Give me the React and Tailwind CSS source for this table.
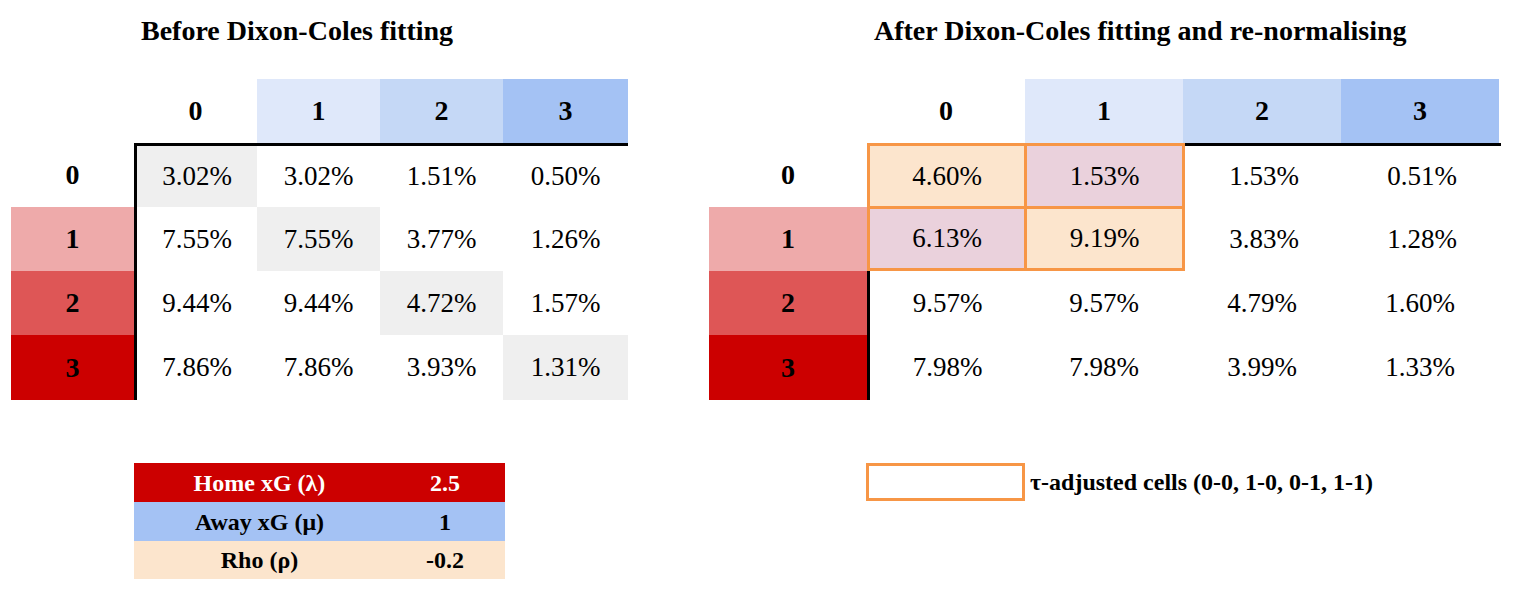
import React from 'react';

const leftCols = ['0', '1', '2', '3'];
const headBg = ['bg-white', 'bg-[#dfe8fa]', 'bg-[#c5d8f6]', 'bg-[#a4c2f4]'];
const rowBg = ['bg-white', 'bg-[#eeaaaa]', 'bg-[#de5656]', 'bg-[#cc0000]'];

const before = [
    ['3.02%', '3.02%', '1.51%', '0.50%'],
    ['7.55%', '7.55%', '3.77%', '1.26%'],
    ['9.44%', '9.44%', '4.72%', '1.57%'],
    ['7.86%', '7.86%', '3.93%', '1.31%'],
];

const after = [
    ['4.60%', '1.53%', '1.53%', '0.51%'],
    ['6.13%', '9.19%', '3.83%', '1.28%'],
    ['9.57%', '9.57%', '4.79%', '1.60%'],
    ['7.98%', '7.98%', '3.99%', '1.33%'],
];

const rowH = ['h-[64px]', 'h-[64px]', 'h-[64px]', 'h-[65px]'];
const Cell = ({ className = '', children }) => (
    <div className={`flex items-center justify-center ${className}`}>{children}</div>
);

const Title = ({ children, className = '' }) => (
    <h2 className={`h-[62px] flex items-center text-[28px] font-bold text-black ${className}`}>{children}</h2>
);

const BeforeTable = () => (
    <div className="flex flex-col">
        <div className="flex h-[64px]">
            <div className="w-[123px]" />
            {leftCols.map((c, i) => (
                <Cell key={c} className={`${i === 3 ? 'w-[125px]' : 'w-[123px]'} text-[28px] font-bold ${headBg[i]}`}>{c}</Cell>
            ))}
        </div>
        <div className="flex">
            <div className="flex flex-col w-[123px]">
                {leftCols.map((r, i) => (
                    <Cell key={r} className={`${rowH[i]} text-[28px] font-bold ${rowBg[i]}`}>{r}</Cell>
                ))}
            </div>
            <div className="flex flex-col border-l-[3px] border-t-[3px] border-black">
                {before.map((row, ri) => (
                    <div key={ri} className={`flex ${ri === 0 ? 'h-[61px]' : rowH[ri]}`}>
                        {row.map((v, ci) => (
                            <Cell
                                key={ci}
                                className={`${ci === 0 ? 'w-[120px]' : ci === 3 ? 'w-[125px]' : 'w-[123px]'} text-[27px] ${ri === ci ? 'bg-[#efefef]' : ''}`}
                            >
                                {v}
                            </Cell>
                        ))}
                    </div>
                ))}
            </div>
        </div>
    </div>
);

const AfterTable = () => (
    <div className="flex flex-col">
        <div className="flex h-[64px]">
            <div className="w-[158px]" />
            {leftCols.map((c, i) => (
                <Cell key={c} className={`w-[158px] text-[28px] font-bold ${headBg[i]}`}>{c}</Cell>
            ))}
        </div>
        <div className="flex">
            <div className="flex flex-col w-[158px]">
                {leftCols.map((r, i) => (
                    <Cell key={r} className={`${rowH[i]} text-[28px] font-bold ${rowBg[i]}`}>{r}</Cell>
                ))}
            </div>
            <div className="flex flex-col border-l-[3px] border-t-[3px] border-black">
                <div className="flex h-[125px]">
                    {/* tau-adjusted block */}
                    <div className="-ml-[3px] -mt-[3px] grid grid-cols-[154px_155px] grid-rows-[60px_59px] gap-[3px] border-[3px] border-[#f79646] bg-[#f79646] text-[27px]">
                        <Cell className="bg-[#fce5cd]">{after[0][0]}</Cell>
                        <Cell className="bg-[#ead1dc]">{after[0][1]}</Cell>
                        <Cell className="bg-[#ead1dc]">{after[1][0]}</Cell>
                        <Cell className="bg-[#fce5cd]">{after[1][1]}</Cell>
                    </div>
                    <div className="flex flex-col">
                        {[0, 1].map((ri) => (
                            <div key={ri} className={`flex ${ri === 0 ? 'h-[61px]' : 'h-[64px]'}`}>
                                {after[ri].slice(2).map((v, ci) => (
                                    <Cell key={ci} className="w-[158px] text-[27px]">{v}</Cell>
                                ))}
                            </div>
                        ))}
                    </div>
                </div>
                {[2, 3].map((ri) => (
                    <div key={ri} className={`flex ${rowH[ri]}`}>
                        {after[ri].map((v, ci) => (
                            <Cell key={ci} className={`${ci === 0 ? 'w-[155px]' : 'w-[158px]'} text-[27px]`}>{v}</Cell>
                        ))}
                    </div>
                ))}
            </div>
        </div>
    </div>
);

const Params = () => (
    <div className="ml-[123px] mt-[63px] w-[371px] grid grid-cols-[251px_120px] text-[24px] font-bold">
        <Cell className="h-[39px] bg-[#cc0000] text-white">Home xG (λ)</Cell>
        <Cell className="h-[39px] bg-[#cc0000] text-white">2.5</Cell>
        <Cell className="h-[39px] bg-[#a4c2f4]">Away xG (μ)</Cell>
        <Cell className="h-[39px] bg-[#a4c2f4]">1</Cell>
        <Cell className="h-[38px] bg-[#fce5cd]">Rho (ρ)</Cell>
        <Cell className="h-[38px] bg-[#fce5cd]">-0.2</Cell>
    </div>
);

const Legend = () => (
    <div className="ml-[157px] mt-[63px] flex items-center gap-[5px]">
        <div className="w-[159px] h-[38px] border-[3px] border-[#f79646]" />
        <span className="text-[24px] font-bold">τ-adjusted cells (0-0, 1-0, 0-1, 1-1)</span>
    </div>
);

export default function App() {
    return (
        <div className="w-[1522px] h-[591px] bg-white text-black font-['Liberation_Serif',serif] flex pl-[11px] overflow-hidden">
            <div className="flex flex-col w-[617px]">
                <Title className="ml-[130px]">Before Dixon-Coles fitting</Title>
                <div className="mt-[17px]">
                    <BeforeTable />
                </div>
                <Params />
            </div>
            <div className="flex flex-col ml-[81px] w-[792px]">
                <Title className="ml-[165px]">After Dixon-Coles fitting and re-normalising</Title>
                <div className="mt-[17px]">
                    <AfterTable />
                </div>
                <Legend />
            </div>
        </div>
    );
}
